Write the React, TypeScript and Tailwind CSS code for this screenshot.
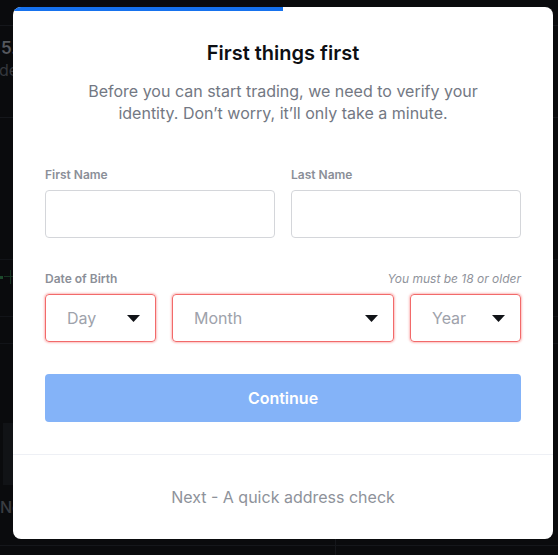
import { ChangeEvent, useState } from 'react'

const font = { fontFamily: 'Inter, "Noto Sans", sans-serif' }

function Caret() {
  return (
    <svg width="13" height="7" viewBox="0 0 13 7" className="shrink-0">
      <path d="M0 0h13L6.5 7z" fill="#111318" />
    </svg>
  )
}

interface SelectBoxProps {
  placeholder: string
}

function SelectBox({ placeholder }: SelectBoxProps) {
  return (
    <div className="flex h-[48px] items-center justify-between rounded-[4px] border border-[#f26a6a] pl-[21px] pr-[15px] shadow-[0_0_2px_1px_rgba(248,113,113,0.45)]">
      <span className="text-[16px] text-[#9ea2ab]">{placeholder}</span>
      <Caret />
    </div>
  )
}

function Backdrop() {
  return (
    <div className="pointer-events-none absolute inset-0">
      <div className="absolute left-0 right-0 top-[25px] h-px bg-[#15171b]" />
      <div className="absolute left-[1px] top-[36px] text-[17px] font-semibold text-[#55585e]">5.</div>
      <div className="absolute left-[-1px] top-[58px] text-[16px] text-[#35383d]">de</div>
      <div className="absolute left-0 right-0 top-[117px] h-px bg-[#15171b]" />
      <div className="absolute left-0 right-0 top-[259px] h-px bg-[#121418]" />
      <div className="absolute left-0 top-[276px] h-[3px] w-[3px] bg-[#1d4a2c]" />
      <div className="absolute left-[10px] top-[270px] h-[14px] w-px bg-[#173322]" />
      <div className="absolute left-[4px] top-[276px] h-px w-[9px] bg-[#173322]" />
      <div className="absolute left-0 right-0 top-[316px] h-px bg-[#121418]" />
      <div className="absolute left-0 right-0 top-[343px] h-px bg-[#121418]" />
      <div className="absolute left-[3px] top-[423px] h-[62px] w-[10px] bg-[#111316]" />
      <div className="absolute left-0 top-[495px] text-[16px] font-medium text-[#3a3d42]">No</div>
      <div className="absolute left-0 right-0 top-[545px] h-px bg-[#15171b]" />
      <div className="absolute left-[335px] top-[539px] h-[16px] w-px bg-[#15171b]" />
    </div>
  )
}

export default function App() {
  const [first, setFirst] = useState('')
  const [last, setLast] = useState('')

  return (
    <div className="relative h-[555px] w-full overflow-hidden bg-[#0a0b0d]" style={font}>
      <Backdrop />
      <div className="relative pl-[13px] pt-[7px]">
        <div className="flex h-[532px] w-[540px] flex-col overflow-hidden rounded-lg bg-white">
          <div className="h-[4px] w-1/2 bg-[#1672ee]" />

          <div className="flex flex-col px-8">
            <h1 className="mt-[28px] text-center text-[20px] font-semibold leading-[28px] text-[#0d0f13]">
              First things first
            </h1>
            <p className="mx-auto mt-[13px] w-[420px] text-center text-[16px] leading-[22px] text-[#737883]">
              Before you can start trading, we need to verify your identity. Don’t worry, it’ll only take a minute.
            </p>

            <div className="mt-[43px] grid grid-cols-2 gap-4">
              <label className="flex flex-col">
                <span className="text-[12px] font-semibold leading-4 text-[#8b8f98]">First Name</span>
                <input
                  value={first}
                  onChange={(e: ChangeEvent<HTMLInputElement>) => setFirst(e.target.value)}
                  className="mt-[7px] h-[48px] rounded-[4px] border border-[#d4d6da] px-4 text-[16px] outline-none"
                />
              </label>
              <label className="flex flex-col">
                <span className="text-[12px] font-semibold leading-4 text-[#8b8f98]">Last Name</span>
                <input
                  value={last}
                  onChange={(e: ChangeEvent<HTMLInputElement>) => setLast(e.target.value)}
                  className="mt-[7px] h-[48px] rounded-[4px] border border-[#d4d6da] px-4 text-[16px] outline-none"
                />
              </label>
            </div>

            <div className="mt-[33px] flex items-center justify-between">
              <span className="text-[12px] font-semibold leading-4 text-[#8b8f98]">Date of Birth</span>
              <span className="text-[12px] italic leading-4 text-[#8f939b]">You must be 18 or older</span>
            </div>
            <div className="mt-[7px] grid grid-cols-[1fr_2fr_1fr] gap-4">
              <SelectBox placeholder="Day" />
              <SelectBox placeholder="Month" />
              <SelectBox placeholder="Year" />
            </div>

            <button className="mt-[32px] h-[48px] rounded-[4px] bg-[#84b3f8] text-[16px] font-semibold text-white">
              Continue
            </button>
          </div>

          <div className="mt-[32px] h-px bg-[#eef0f5]" />
          <div className="mt-[30px] text-center text-[16px] leading-6 text-[#8e929a]">
            Next - A quick address check
          </div>
        </div>
      </div>
    </div>
  )
}
